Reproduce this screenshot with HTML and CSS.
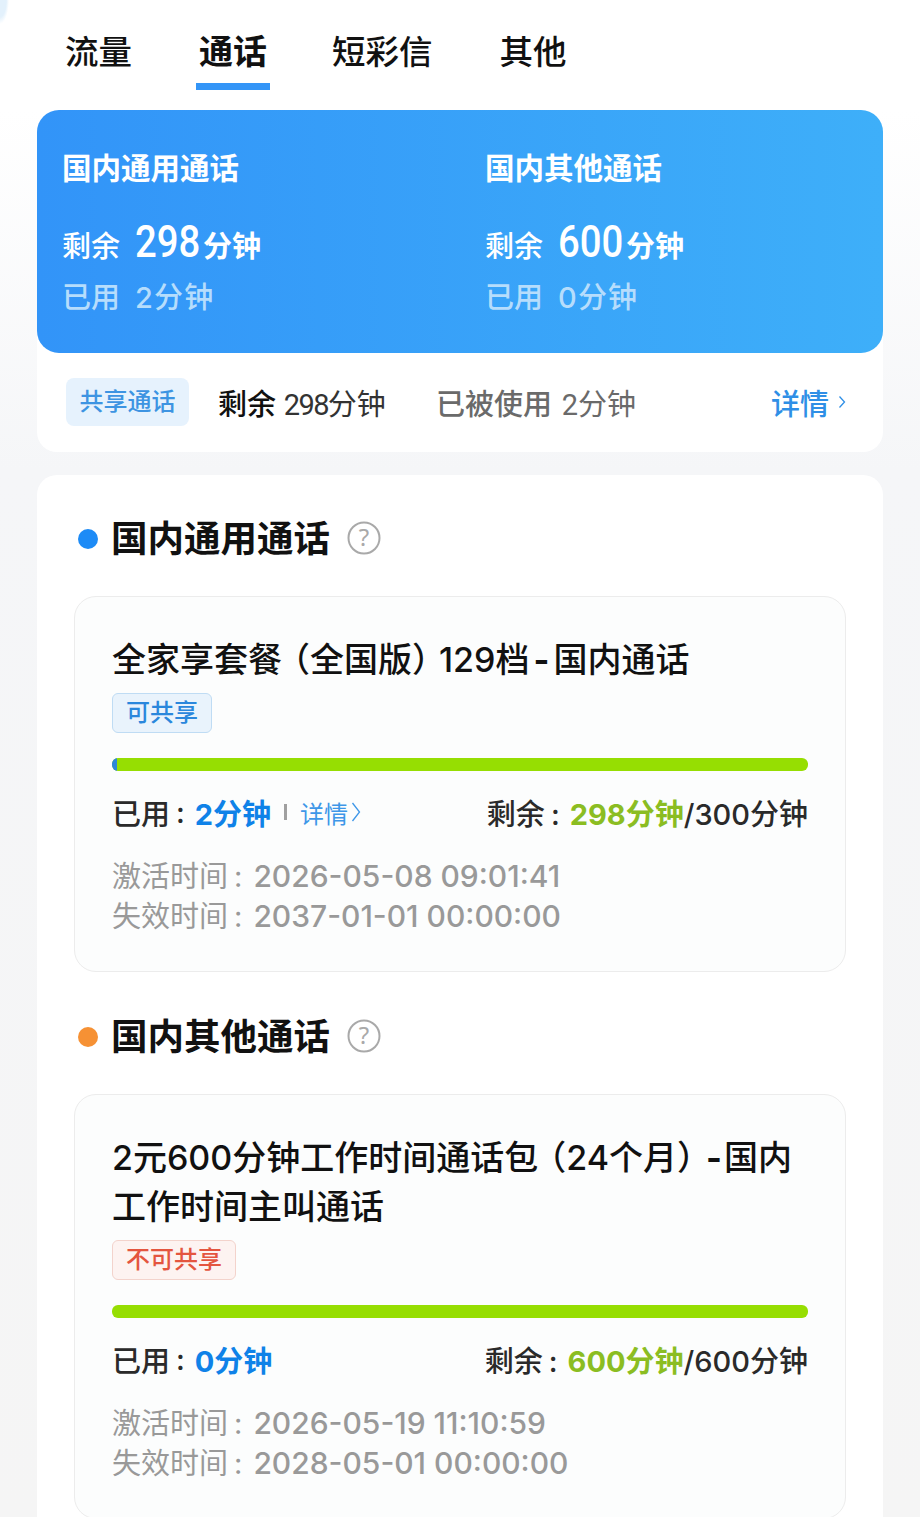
FILE: index.html
```html
<!DOCTYPE html>
<html lang="zh-CN">
<head>
<meta charset="utf-8">
<title>通话</title>
<link rel="stylesheet" href="styles.css">
</head>
<body>
<div class="screen">
  <nav class="tabs">
    <span class="tab">流量</span>
    <span class="tab active">通话</span>
    <span class="tab">短彩信</span>
    <span class="tab">其他</span>
  </nav>
  <section class="summary">
    <div class="hero">
      <div class="hero-col">
        <div class="hero-title">国内通用通话</div>
        <div class="hero-left"><span class="hero-label">剩余</span><span class="hero-num">298</span><span class="hero-unit">分钟</span></div>
        <div class="hero-used"><span class="hero-label">已用</span><span class="hero-val">2分钟</span></div>
      </div>
      <div class="hero-col">
        <div class="hero-title">国内其他通话</div>
        <div class="hero-left"><span class="hero-label">剩余</span><span class="hero-num">600</span><span class="hero-unit">分钟</span></div>
        <div class="hero-used"><span class="hero-label">已用</span><span class="hero-val">0分钟</span></div>
      </div>
    </div>
    <div class="share">
      <span class="share-tag">共享通话</span>
      <span class="share-left">剩余 <span class="num-dark">298</span><span class="unit-dark">分钟</span></span>
      <span class="share-used">已被使用 <span class="num-narrow">2分钟</span></span>
      <span class="share-more">详情<svg class="chev-a" viewBox="0 0 8 16" width="8" height="16"><path d="M1.5 2.5 6.5 8 1.5 13.5" fill="none" stroke="#2f8fe6" stroke-width="1.3"/></svg></span>
    </div>
  </section>
  <section class="detail">
    <h2 class="sec-title"><i class="dot dot-blue"></i>国内通用通话<svg class="help" viewBox="0 0 34 34" width="34" height="34"><circle cx="17" cy="17" r="15.5" fill="none" stroke="#a9a9a9" stroke-width="2"/><text x="17" y="25" text-anchor="middle" class="help-q">?</text></svg></h2>
    <article class="pack">
      <h3 class="pack-name"><span class="name-line">全家享套餐<span class="paren-l">（</span>全国版<span class="paren-r">）</span>129档<span class="dash">-</span>国内通话</span></h3>
      <span class="badge badge-blue">可共享</span>
      <div class="bar"><i class="bar-used bar-used-small"></i></div>
      <div class="usage">
        <span class="usage-l">已用<span class="colon">:</span><b class="blue">2分钟</b><i class="sep"></i><span class="more">详情<svg viewBox="0 0 10 22" width="10" height="22"><path d="M1.5 2 8.5 11 1.5 20" fill="none" stroke="#3e97e8" stroke-width="1.3"/></svg></span></span>
        <span>剩余<span class="colon">:</span><b class="green">298分钟</b>/300分钟</span>
      </div>
      <div class="time">激活时间<span class="colon">:</span><span class="stamp">2026-05-08 09:01:41</span></div>
      <div class="time">失效时间<span class="colon">:</span><span class="stamp">2037-01-01 00:00:00</span></div>
    </article>
    <h2 class="sec-title"><i class="dot dot-orange"></i>国内其他通话<svg class="help" viewBox="0 0 34 34" width="34" height="34"><circle cx="17" cy="17" r="15.5" fill="none" stroke="#a9a9a9" stroke-width="2"/><text x="17" y="25" text-anchor="middle" class="help-q">?</text></svg></h2>
    <article class="pack">
      <h3 class="pack-name"><span class="name-line">2元600分钟工作时间通话包<span class="paren-l">（</span>24个月<span class="paren-r">）</span><span class="dash dash-tight">-</span>国内</span><span class="name-line">工作时间主叫通话</span></h3>
      <span class="badge badge-red">不可共享</span>
      <div class="bar"></div>
      <div class="usage">
        <span class="usage-l">已用<span class="colon">:</span><b class="blue">0分钟</b></span>
        <span>剩余<span class="colon">:</span><b class="green">600分钟</b>/600分钟</span>
      </div>
      <div class="time">激活时间<span class="colon">:</span><span class="stamp">2026-05-19 11:10:59</span></div>
      <div class="time">失效时间<span class="colon">:</span><span class="stamp">2028-05-01 00:00:00</span></div>
    </article>
  </section>
</div>
<div class="foot"></div>
</body>
</html>
```
FILE: styles.css
```css
* { box-sizing: border-box; }
html, body { margin: 0; padding: 0; }
body {
  width: 920px;
  height: 1535px;
  overflow: hidden;
  background: #fff;
  font-family: "Inter", "Noto Sans CJK SC", sans-serif;
  color: #222;
}
.screen {
  height: 1517px;
  overflow: hidden;
  padding: 0 37px;
  background:
    radial-gradient(ellipse 9px 24px at 0 0, #e3f1fc 0, #e3f1fc 70%, rgba(227, 241, 252, 0) 100%),
    linear-gradient(180deg, #fff 0, #fff 110px, #f5f6f8 470px, #f5f5f5 100%);
}
.tabs {
  display: flex;
  gap: 67px;
  height: 90px;
  padding-left: 28px;
  font-weight: 500;
  color: #111;
}
.tab {
  position: relative;
  padding-top: 28px;
  line-height: 48px;
  font-size: 33.5px;
}
.active { margin-right: -2px; font-size: 34px; font-weight: 700; }
.active::after {
  content: "";
  position: absolute;
  left: -3px;
  right: -3px;
  bottom: 0;
  height: 7px;
  background: #3395f7;
}
.summary {
  height: 342px;
  margin-top: 20px;
  background: #fff;
  border-radius: 20px;
}
.hero {
  display: flex;
  height: 243px;
  padding: 39px 25px 0;
  border-radius: 22px;
  color: #fff;
  background: linear-gradient(90deg, #3294f8, #3eaff9);
}
.hero-col { flex: 0 0 423px; }
.hero-title { font-size: 29.5px; font-weight: 700; line-height: 38px; }
.hero-left {
  display: flex;
  align-items: baseline;
  height: 46px;
  margin-top: 32px;
  font-size: 29px;
  font-weight: 500;
  line-height: 46px;
}
.hero-label { width: 73px; }
.hero-num {
  display: inline-block;
  width: 64px;
  font-family: "Roboto", sans-serif;
  font-size: 44px;
  font-weight: 500;
  white-space: nowrap;
  transform: scaleX(.87);
  transform-origin: 0 50%;
}
.hero-unit { margin-left: 4px; font-weight: 700; }
.hero-used {
  display: flex;
  margin-top: 13px;
  font-size: 29px;
  font-weight: 500;
  line-height: 40px;
  color: #b6ddfc;
}
.hero-val { letter-spacing: 1.2px; }
.share {
  display: flex;
  align-items: center;
  height: 99px;
  padding: 0 35px 2px 29px;
  font-size: 29px;
}
.share-tag {
  flex: none;
  width: 123px;
  height: 48px;
  margin-right: 29px;
  border-radius: 8px;
  background: #e6f2fd;
  color: #3d94e2;
  font-size: 24px;
  font-weight: 500;
  line-height: 48px;
  text-align: center;
}
.share-left { flex: none; width: 218px; color: #111; font-weight: 500; white-space: nowrap; }
.num-dark {
  color: #333;
  font-family: "Roboto", sans-serif;
  font-weight: 400;
  letter-spacing: -1.6px;
}
.unit-dark { color: #333; font-weight: 400; }
.num-narrow { margin-left: 2px; font-family: "Roboto", "Noto Sans CJK SC", sans-serif; font-weight: 400; }
.share-used { flex: none; width: 335px; color: #6a6a6a; font-weight: 500; white-space: nowrap; }
.share-more { display: flex; align-items: center; color: #2f8fe6; font-weight: 500; white-space: nowrap; }
.chev-a { margin-left: 9px; }
.detail {
  height: 1100px;
  margin-top: 23px;
  padding: 40px 37px 0;
  background: #fff;
  border-radius: 20px 20px 0 0;
}
.sec-title {
  display: flex;
  align-items: center;
  height: 48px;
  margin: 0;
  font-size: 36.5px;
  font-weight: 700;
  color: #111;
  line-height: 48px;
}
.pack + .sec-title { margin-top: 41px; }
.dot {
  width: 20px;
  height: 20px;
  margin: 0 13px 0 4px;
  border-radius: 50%;
}
.dot-blue { background: #1d8bf6; }
.dot-orange { background: #f69134; }
.help { margin-left: 17px; margin-top: -2px; }
.help-q { font-family: "Noto Sans", sans-serif; font-size: 24px; font-weight: 400; fill: #a9a9a9; }
.pack {
  display: block;
  margin-top: 33px;
  padding: 38px 37px 35px;
  border: 1px solid #ececec;
  border-radius: 22px;
  background: #fcfdfd;
}
.pack-name {
  margin: 0;
  font-size: 34px;
  font-weight: 500;
  line-height: 49px;
  color: #111;
}
.name-line { display: block; height: 49px; white-space: nowrap; }
.paren-l { margin-left: 11px; font-feature-settings: "halt"; }
.paren-r { margin-right: 10px; font-feature-settings: "halt"; }
.dash { margin: 0 4px; font-weight: 700; }
.dash-tight { margin: 0 2px; }
.badge {
  display: block;
  width: max-content;
  height: 40px;
  margin-top: 9px;
  padding: 0 13px;
  border-radius: 6px;
  font-size: 24px;
  font-weight: 500;
  line-height: 37px;
}
.badge-blue { background: #e9f3fc; border: 1px solid #bfdcf4; color: #2a87dc; }
.badge-red { background: #fdf3f1; border: 1px solid #f3d3cc; color: #e4553f; }
.bar {
  height: 13px;
  margin-top: 25px;
  border-radius: 6px;
  overflow: hidden;
  background: #96de02;
}
.bar-used { display: block; height: 100%; background: #2d87d8; }
.bar-used-small { width: 5px; }
.usage {
  display: flex;
  justify-content: space-between;
  align-items: center;
  height: 44px;
  margin-top: 19px;
  font-size: 29px;
  font-weight: 500;
  color: #2a2a2a;
}
.usage-l { display: flex; align-items: center; white-space: pre; }
.usage b { font-weight: 700; }
.colon { margin: 0 11px 0 6px; }
.usage .colon { margin: 0 10px 0 6px; }
.blue { color: #0f82e8; }
.green { color: #8bbd22; }
.sep { width: 3px; height: 16px; margin: 0 13px; background: #a0a0a0; }
.more { display: flex; align-items: center; font-size: 24px; font-weight: 400; color: #3e97e8; }
.more svg { margin-left: 3px; }
.time {
  height: 40px;
  font-size: 29px;
  line-height: 40px;
  color: #999;
}
.stamp { font-size: 30px; font-weight: 500; letter-spacing: 0; }
.usage + .time { margin-top: 22px; }
.foot { height: 18px; background: #fff; }
```
